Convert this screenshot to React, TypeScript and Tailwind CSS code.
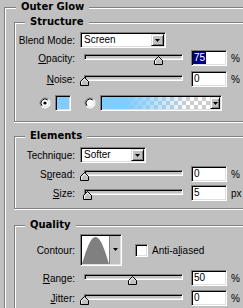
import React from "react";

const sunken =
  "border border-t-[#808080] border-l-[#808080] border-b-white border-r-white shadow-[inset_1px_1px_0_#000,inset_-1px_-1px_0_#dfdfdf]";
const raised =
  "border border-t-[#dfdfdf] border-l-[#dfdfdf] border-b-black border-r-black shadow-[inset_1px_1px_0_#fff,inset_-1px_-1px_0_#808080] bg-[#c0c0c0]";

const DownArrow = () => (
  <svg width="5" height="3" viewBox="0 0 5 3">
    <path d="M0 0H5L2.5 3Z" fill="#000" />
  </svg>
);

const Thumb = () => (
  <svg width="9" height="9" viewBox="0 0 9 9">
    <path d="M0.5 8.5V4.5L4.5 0.5L8.5 4.5V8.5Z" fill="#c0c0c0" stroke="#000" />
    <path d="M1.5 7.5V4.9L4.5 1.9L7 4.4" fill="none" stroke="#fff" />
  </svg>
);

const Radio = ({ checked }: { checked?: boolean }) => (
  <svg width="12" height="12" viewBox="0 0 12 12" className="shrink-0">
    <circle cx="6" cy="6" r="5" fill="#fff" />
    <path d="M2.46 9.54A5 5 0 0 1 9.54 2.46" fill="none" stroke="#808080" />
    <path d="M9.54 2.46A5 5 0 0 1 2.46 9.54" fill="none" stroke="#fff" />
    <path d="M3.17 8.83A4 4 0 0 1 8.83 3.17" fill="none" stroke="#000" />
    <path d="M8.83 3.17A4 4 0 0 1 3.17 8.83" fill="none" stroke="#dfdfdf" />
    {checked && <circle cx="6" cy="6" r="1.6" fill="#000" />}
  </svg>
);

interface GroupProps {
  title: string;
  className: string;
  children: React.ReactNode;
}

// etched group box, title sits over the top line
const Group = ({ title, className, children }: GroupProps) => (
  <div
    className={`border-l border-t border-b border-[#808080] shadow-[inset_1px_1px_0_#fff,0_1px_0_#fff] ${className}`}
  >
    <div className="-mt-[8px] ml-[10px] h-[14px] w-fit bg-[#c0c0c0] px-[5px] font-['DejaVu_Sans',sans-serif] text-[10px] font-bold leading-[14px]">
      {title}
    </div>
    {children}
  </div>
);

const Label = ({ children }: { children: React.ReactNode }) => (
  <div className="w-[60px] shrink-0 text-right">{children}</div>
);

const Select = ({ value, className }: { value: string; className: string }) => (
  <div className={`ml-[5px] flex h-[16px] bg-white p-[1px] ${sunken} ${className}`}>
    <span className="flex-1 pl-[2px] leading-[12px]">{value}</span>
    <div className={`flex h-[12px] w-[13px] items-center justify-center ${raised}`}>
      <DownArrow />
    </div>
  </div>
);

const Slider = ({ value }: { value: number }) => (
  <div className="relative ml-[5px] h-[16px] w-[107px] shrink-0 px-[4px]">
    <div className={`mt-[4px] h-[6px] w-full bg-[#c0c0c0] ${sunken}`} />
    <div
      className="absolute top-[6px] h-[9px] w-[9px]"
      style={{ left: `${4 + (value / 100) * 99 - 4.5}px` }}
    >
      <Thumb />
    </div>
  </div>
);

const NumInput = ({ value, selected }: { value: string; selected?: boolean }) => (
  <div className={`ml-[4px] flex h-[16px] w-[36px] shrink-0 items-center bg-white p-[1px] ${sunken}`}>
    {selected ? (
      <span className="bg-[#000080] px-[1px] leading-[12px] text-white">{value}</span>
    ) : (
      <span className="ml-[1px] leading-[12px]">{value}</span>
    )}
  </div>
);

interface SliderRowProps {
  label: React.ReactNode;
  value: number;
  text: string;
  unit: string;
  selected?: boolean;
  className: string;
}

const SliderRow = ({ label, value, text, unit, selected, className }: SliderRowProps) => (
  <div className={`flex h-[16px] items-center ${className}`}>
    <Label>{label}</Label>
    <Slider value={value} />
    <NumInput value={text} selected={selected} />
    <span className="ml-[4px]">{unit}</span>
  </div>
);

export default function App() {
  return (
    <div className="h-[308px] w-[243px] overflow-hidden bg-[#c0c0c0] pl-[4px] pt-[7px] font-['Liberation_Sans',Arial,sans-serif] text-[10px] text-black">
      <div className="w-[270px] border-l border-t border-[#808080] pb-[20px] shadow-[inset_1px_1px_0_#fff]">
        <div className="-mt-[8px] ml-[11px] h-[14px] w-fit bg-[#c0c0c0] px-[5px] font-['DejaVu_Sans',sans-serif] text-[10px] font-bold leading-[14px]">
          Outer Glow
        </div>

        <Group title="Structure" className="ml-[9px] mt-[8px] w-[250px] pb-[10px]">
          <div className="mt-[3px] flex h-[16px] items-center">
            <Label>Blend Mode:</Label>
            <Select value="Screen" className="w-[86px]" />
          </div>
          <SliderRow
            className="mt-[2px]"
            label={<><span className="underline">O</span>pacity:</>}
            value={75}
            text="75"
            unit="%"
            selected
          />
          <SliderRow
            className="mt-[5px]"
            label={<><span className="underline">N</span>oise:</>}
            value={0}
            text="0"
            unit="%"
          />
          <div className="mt-[8px] flex h-[16px] items-center">
            <div className="ml-[24px]">
              <Radio checked />
            </div>
            <div className={`ml-[4px] h-[16px] w-[16px] bg-[#80ccff] ${sunken}`} />
            <div className="ml-[13px]">
              <Radio />
            </div>
            <div className={`ml-[4px] flex h-[16px] w-[122px] p-[1px] ${sunken}`}>
              <div className="h-full flex-1 bg-[repeating-conic-gradient(#cccccc_0%_25%,#ffffff_0%_50%)] bg-[length:8px_8px]">
                <div className="h-full w-full bg-[linear-gradient(to_right,#80ccff_0%,#80ccff_22%,rgba(128,204,255,0.35)_62%,rgba(128,204,255,0)_80%)]" />
              </div>
              <div className={`flex h-[12px] w-[10px] items-center justify-center ${raised}`}>
                <DownArrow />
              </div>
            </div>
          </div>
        </Group>

        <Group title="Elements" className="ml-[9px] mt-[14px] w-[250px] pb-[7px]">
          <div className="mt-[4px] flex h-[16px] items-center">
            <Label>Technique:</Label>
            <Select value="Softer" className="w-[66px]" />
          </div>
          <SliderRow
            className="mt-[3px]"
            label={<>S<span className="underline">p</span>read:</>}
            value={0}
            text="0"
            unit="%"
          />
          <SliderRow
            className="mt-[3px]"
            label={<><span className="underline">S</span>ize:</>}
            value={4}
            text="5"
            unit="px"
          />
        </Group>

        <Group title="Quality" className="ml-[9px] mt-[16px] w-[250px] pb-[10px]">
          <div className="mt-[2px] flex h-[32px] items-center">
            <Label>Contour:</Label>
            <div className={`ml-[5px] flex h-[32px] w-[42px] bg-white p-[1px] ${sunken}`}>
              <div className="flex-1 border-r border-[#808080]">
                <svg width="100%" height="100%" viewBox="0 0 28 28" preserveAspectRatio="none">
                  <path d="M0 28C5 12 9 1 14 1C19 1 23 12 28 28Z" fill="#808080" />
                </svg>
              </div>
              <div className="flex w-[10px] justify-center bg-[#c0c0c0] pt-[12px]">
                <DownArrow />
              </div>
            </div>
            <div className={`ml-[13px] h-[13px] w-[13px] bg-white ${sunken}`} />
            <span className="ml-[4px]">
              Anti-a<span className="underline">l</span>iased
            </span>
          </div>
          <SliderRow
            className="mt-[4px]"
            label={<><span className="underline">R</span>ange:</>}
            value={49}
            text="50"
            unit="%"
          />
          <SliderRow
            className="mt-[4px]"
            label={<><span className="underline">J</span>itter:</>}
            value={0}
            text="0"
            unit="%"
          />
        </Group>
      </div>
    </div>
  );
}
